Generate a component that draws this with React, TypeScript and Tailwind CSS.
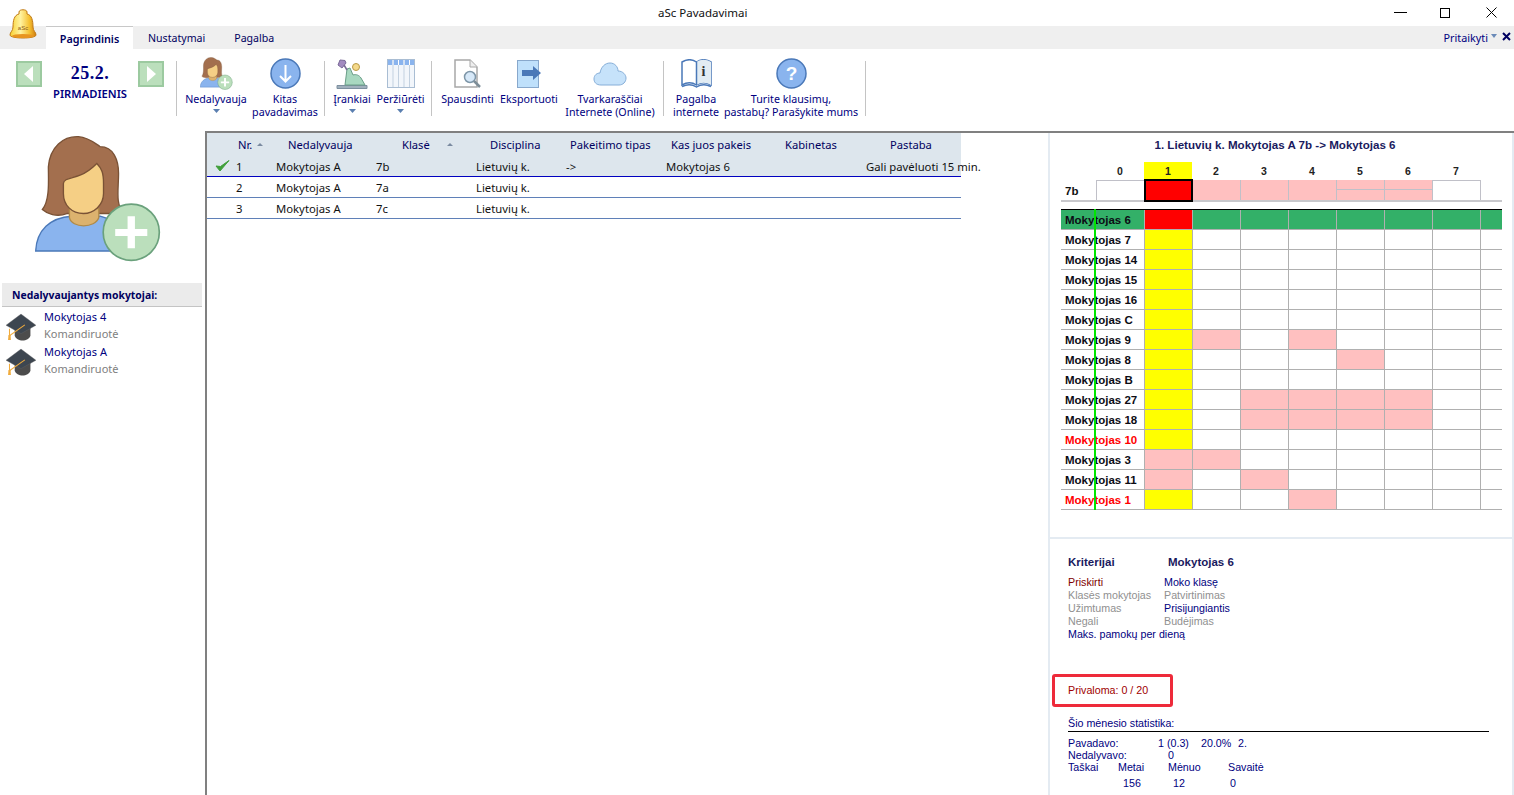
import type { ReactNode } from "react";

const ROWS: { name: string; red?: boolean; cells: string[] }[] = [
	{ name: "Mokytojas 7", cells: ["y"] },
	{ name: "Mokytojas 14", cells: ["y"] },
	{ name: "Mokytojas 15", cells: ["y"] },
	{ name: "Mokytojas 16", cells: ["y"] },
	{ name: "Mokytojas C", cells: ["y"] },
	{ name: "Mokytojas 9", cells: ["y", "p", "", "p"] },
	{ name: "Mokytojas 8", cells: ["y", "", "", "", "p"] },
	{ name: "Mokytojas B", cells: ["y"] },
	{ name: "Mokytojas 27", cells: ["y", "", "p", "p", "p", "p"] },
	{ name: "Mokytojas 18", cells: ["y", "", "p", "p", "p", "p"] },
	{ name: "Mokytojas 10", red: true, cells: ["y"] },
	{ name: "Mokytojas 3", cells: ["p", "p"] },
	{ name: "Mokytojas 11", cells: ["p", "", "p"] },
	{ name: "Mokytojas 1", red: true, cells: ["y", "", "", "p"] },
];

const COLS = [0, 1, 2, 3, 4, 5, 6, 7];

function cellColor(code: string) {
	if (code === "y") return "bg-[#ffff00]";
	if (code === "p") return "bg-[#ffc0c0]";
	return "bg-white";
}

function TeacherIcon({ size }: { size: number }) {
	return (
		<svg width={size} height={size} viewBox="105 15 380 380">
			<path d="M107 362C110 300 150 262 215 258L300 258C350 270 390 310 392 362Z" fill="#8ab4ee" stroke="#4a78b8" strokeWidth="4" />
			<path d="M127 238C150 210 145 150 145 110C150 50 190 18 235 20C265 22 285 40 300 50C340 50 355 90 355 130C355 180 345 220 370 250L300 250L200 250C170 262 140 250 127 238Z" fill="#a36f4e" stroke="#7a5236" strokeWidth="4" />
			<path d="M208 235L208 262C215 295 285 295 296 262L296 235Z" fill="#dcb26e" stroke="#b08a48" strokeWidth="4" />
			<path d="M190 160C190 145 215 145 240 135C265 125 280 110 290 100C305 115 310 130 310 160L310 190C310 225 280 250 250 250C215 250 190 225 190 190Z" fill="#f5cf85" stroke="#7a5236" strokeWidth="4" />
			<circle cx="393" cy="306" r="84" fill="#bbdfbc" stroke="#6aa17c" strokeWidth="5" />
			<path d="M345 296H382V258H404V296H441V317H404V354H382V317H345Z" fill="#fff" />
		</svg>
	);
}

function BellLogo() {
	return (
		<svg width="28" height="30" viewBox="0 0 28 30">
			<defs>
				<linearGradient id="bell" x1="0" x2="1" y1="0" y2="0">
					<stop offset="0" stopColor="#f8d030" />
					<stop offset="0.4" stopColor="#fff3a0" />
					<stop offset="0.75" stopColor="#f5c030" />
					<stop offset="1" stopColor="#d07c10" />
				</linearGradient>
			</defs>
			<path d="M10 3C10 0 18 0 18 3L18 5C23 6 24 12 24 18C24 22 27 23 27 26C27 30 1 30 1 26C1 23 4 22 4 18C4 12 5 6 10 5Z" fill="url(#bell)" stroke="#c07a14" strokeWidth="1" />
			<ellipse cx="14" cy="27" rx="11" ry="2" fill="#e89520" />
			<text x="14" y="21" fontSize="6" textAnchor="middle" fill="#8a5a10" fontFamily="Liberation Sans, sans-serif">aSc</text>
		</svg>
	);
}

function CapIcon() {
	return (
		<svg width="30" height="28" viewBox="20 548 86 78">
			<path d="M45 585L45 612C50 630 85 630 90 612L90 585Z" fill="#4c4c4c" />
			<path d="M20 582L63 550L106 582L63 606Z" fill="#3d4650" stroke="#6a6a6a" strokeWidth="1" />
			<path d="M30 592L30 612L74 581" fill="none" stroke="#f0ab3c" strokeWidth="3" />
			<path d="M27 610H33L34 624H26Z" fill="#f0ab3c" />
		</svg>
	);
}

function DownIcon() {
	return (
		<svg width="31" height="31" viewBox="0 0 31 31">
			<circle cx="15.500" cy="15.500" r="14.500" fill="#8ab4ee" stroke="#4a78b8" strokeWidth="1.500" />
			<path d="M15.500 7V23M10 18L15.500 23.500L21 18" fill="none" stroke="#fff" strokeWidth="2" />
		</svg>
	);
}

function ToolsIcon() {
	return (
		<svg width="32" height="30" viewBox="0 0 32 30">
			<path d="M1 26.500H31V29.500H1Z" fill="#a0b0bc" stroke="#7e90a0" strokeWidth="1" />
			<path d="M9 26L11 10L14 9L17 16C20 15 23 16 25 19L29 26Z" fill="#a8d8c0" stroke="#6a9e88" strokeWidth="1" />
			<path d="M4 1L9 1.500L10 4L6 9L2 6Z" fill="#a28ac0" stroke="#7a6a98" strokeWidth="1" />
			<path d="M8 6L11 11" stroke="#7a6a98" strokeWidth="1.500" />
			<circle cx="20" cy="8" r="3.500" fill="#f5d98a" stroke="#b89a48" strokeWidth="1" />
		</svg>
	);
}

function ViewIcon() {
	return (
		<svg width="28" height="29" viewBox="0 0 28 29">
			<rect x="0.500" y="0.500" width="27" height="28" fill="#f2f6fb" stroke="#a9bdd3" />
			<rect x="1" y="1" width="26" height="5" fill="#8ab4ee" />
			<path d="M6 1V28M11.500 1V28M17 1V28M22.500 1V28" stroke="#c3d1e0" strokeWidth="1" />
			<path d="M6 1V6M11.500 1V6M17 1V6M22.500 1V6" stroke="#fff" strokeWidth="1" />
		</svg>
	);
}

function DocSearchIcon() {
	return (
		<svg width="28" height="30" viewBox="0 0 28 30">
			<path d="M1 1H16L23 8V28H1Z" fill="#fff" stroke="#a8a8a8" strokeWidth="1.500" />
			<path d="M16 1V8H23" fill="#eee" stroke="#a8a8a8" strokeWidth="1" />
			<circle cx="16" cy="18" r="5.500" fill="#d6e8f8" stroke="#7e96a8" strokeWidth="1.500" />
			<path d="M20 22L26 28" stroke="#7e8e98" strokeWidth="2.500" />
		</svg>
	);
}

function ExportIcon() {
	return (
		<svg width="25" height="28" viewBox="0 0 25 28">
			<rect x="0.500" y="0.500" width="21" height="27" fill="#bfe0fb" stroke="#88a8cc" />
			<path d="M5 10H16V6L24 13L16 20V16H5Z" fill="#4a78b8" />
		</svg>
	);
}

function CloudIcon() {
	return (
		<svg width="34" height="24" viewBox="0 0 34 24">
			<path d="M8 23C3 23 1 20 1 17C1 13 4 11 7 11C8 5 12 1 17 1C22 1 25 5 25 9C30 9 33 13 33 16C33 20 30 23 26 23Z" fill="#c6e2fa" stroke="#86aed8" strokeWidth="1" />
		</svg>
	);
}

function BookIcon() {
	return (
		<svg width="31" height="29" viewBox="0 0 31 29">
			<path d="M1 26C6 23 11 23 15.500 26C20 23 25 23 30 26V3C25 0 20 0 15.500 3C11 0 6 0 1 3Z" fill="#fff" stroke="#4a78b8" strokeWidth="1.500" />
			<path d="M15.500 3C20 0 25 0 30 3V26C25 23 20 23 15.500 26Z" fill="#e2ecf3" />
			<path d="M15.500 3V26M1 27.500C6 25 11 25 15.500 28C20 25 25 25 30 27.500" fill="none" stroke="#4a78b8" strokeWidth="1.500" />
			<text x="22.500" y="17" fontSize="14" fontWeight="700" textAnchor="middle" fill="#333" fontFamily="Liberation Serif, serif">i</text>
		</svg>
	);
}

function HelpIcon() {
	return (
		<svg width="31" height="31" viewBox="0 0 31 31">
			<circle cx="15.500" cy="15.500" r="14.500" fill="#8ab4ee" stroke="#4a78b8" strokeWidth="1.500" />
			<text x="15.500" y="22" fontSize="19" fontWeight="700" textAnchor="middle" fill="#fff" fontFamily="Liberation Sans, sans-serif">?</text>
		</svg>
	);
}

function NavButton({ dir }: { dir: "left" | "right" }) {
	return (
		<div className="w-[26px] h-[26px] bg-[#bbdfbc] border-2 border-[#9ccaa0] flex items-center justify-center">
			<svg width="10" height="16" viewBox="0 0 10 16">
				<path d={dir === "left" ? "M9 0V16L0 8Z" : "M1 0V16L10 8Z"} fill="#fff" />
			</svg>
		</div>
	);
}

function Caret() {
	return (
		<svg width="7" height="4" viewBox="0 0 7 4" className="mt-[3px]">
			<path d="M0 0H7L3.500 4Z" fill="#5a7fb0" />
		</svg>
	);
}

function RibbonItem({
	width,
	icon,
	label,
	caret,
}: {
	width: string;
	icon: ReactNode;
	label: ReactNode;
	caret?: boolean;
}) {
	return (
		<div className={`${width} flex flex-col items-center shrink-0`}>
			<div className="h-[38px] flex items-center justify-center pb-[1px]">{icon}</div>
			<div className="text-center leading-[13px] whitespace-nowrap text-[10.700px] text-[#000080]">
				{label}
			</div>
			{caret && <Caret />}
		</div>
	);
}

function Sep({ className }: { className: string }) {
	return <div className={`w-px h-[55px] mt-[2px] bg-[#c4c4c4] shrink-0 ${className}`} />;
}

function TitleBar() {
	return (
		<div className="h-[26px] bg-white flex items-center shrink-0 relative">
			<div className="pl-[658px] text-[11.500px] text-[#111] whitespace-nowrap">
				aSc Pavadavimai
			</div>
			<div className="ml-auto flex items-center mr-[17px] -mt-[1px]">
				<div className="w-[13px] h-px bg-black" />
				<div className="ml-[33px] w-[10px] h-[10px] border border-black" />
				<svg width="11" height="11" viewBox="0 0 11 11" className="ml-[36px]">
					<path d="M0.500 0.500L10.500 10.500M10.500 0.500L0.500 10.500" stroke="#000" strokeWidth="1" />
				</svg>
			</div>
			<div className="absolute left-[9px] top-[9px] z-10">
				<BellLogo />
			</div>
		</div>
	);
}

function TabBar() {
	return (
		<div className="h-[23px] bg-[#efefef] flex items-start shrink-0 text-[#000060]">
			<div className="ml-[46px] w-[87px] h-[23px] bg-white border-t border-[#c8c8c8] text-center leading-[24px] font-semibold text-[10.800px]">
				Pagrindinis
			</div>
			<div className="ml-[15px] leading-[25px] h-[23px] text-[10.600px]">Nustatymai</div>
			<div className="ml-[29px] leading-[25px] h-[23px] text-[10.600px]">Pagalba</div>
			<div className="ml-auto flex items-center h-[24px] mr-[3px] text-[#000080] text-[10.800px]">
				<span>Pritaikyti</span>
				<svg width="6" height="4" viewBox="0 0 6 4" className="ml-[3px] mb-[4px]">
					<path d="M0 0H6L3 4Z" fill="#6a8ab8" />
				</svg>
				<svg width="9" height="9" viewBox="0 0 9 9" className="ml-[5px] mb-[3px]">
					<path d="M1 1L8 8M8 1L1 8" stroke="#000060" strokeWidth="2" />
				</svg>
			</div>
		</div>
	);
}

function Ribbon() {
	return (
		<div className="h-[83px] bg-white flex items-start pt-[10px] shrink-0">
			<div className="ml-[16px] mt-[2px]">
				<NavButton dir="left" />
			</div>
			<div className="w-[96px] flex flex-col items-center text-[#000080] shrink-0">
				<div className="mt-[2px] font-['Liberation_Serif',serif] font-bold text-[18px] tracking-[0.5px] leading-[24px]">25.2.</div>
				<div className="text-[11.200px] font-semibold leading-[16px] mt-[1px]">PIRMADIENIS</div>
			</div>
			<div className="mt-[2px]">
				<NavButton dir="right" />
			</div>
			<Sep className="ml-[12px]" />
			<div className="-mt-[4px] flex">
				<RibbonItem width="w-[78px]" icon={<TeacherIcon size={33} />} label="Nedalyvauja" caret />
				<RibbonItem width="w-[60px]" icon={<DownIcon />} label={<>Kitas<br />pavadavimas</>} />
			</div>
			<Sep className="ml-[9px]" />
			<div className="-mt-[4px] flex ml-[2px]">
				<RibbonItem width="w-[50px]" icon={<ToolsIcon />} label="Įrankiai" caret />
				<RibbonItem width="w-[47px]" icon={<ViewIcon />} label="Peržiūrėti" caret />
			</div>
			<Sep className="ml-[7px]" />
			<div className="-mt-[4px] flex ml-[5px]">
				<RibbonItem width="w-[61px]" icon={<DocSearchIcon />} label="Spausdinti" />
				<RibbonItem width="w-[62px]" icon={<ExportIcon />} label="Eksportuoti" />
				<RibbonItem width="w-[100px]" icon={<CloudIcon />} label={<>Tvarkaraščiai<br />Internete (Online)</>} />
			</div>
			<Sep className="ml-[3px]" />
			<div className="-mt-[4px] flex">
				<RibbonItem width="w-[64px]" icon={<BookIcon />} label={<>Pagalba<br />internete</>} />
				<RibbonItem width="w-[126px]" icon={<HelpIcon />} label={<>Turite klausimų,<br />pastabų? Parašykite mums</>} />
			</div>
			<Sep className="ml-[11px]" />
		</div>
	);
}

function LeftPanel() {
	return (
		<div className="w-[205px] shrink-0 flex flex-col bg-white">
			<div className="h-[151px] pl-[35px] pt-[3px]">
				<TeacherIcon size={127} />
			</div>
			<div className="ml-[2px] w-[200px] h-[24px] bg-[#ebebeb] border-b border-[#c4c4c4] pl-[10px] text-[10.400px] font-bold leading-[24px] text-[#000060]">
				Nedalyvaujantys mokytojai:
			</div>
			<div className="flex flex-col pt-[1px]">
				{["Mokytojas 4", "Mokytojas A"].map((name) => (
					<div key={name} className="h-[35px] flex">
						<div className="w-[44px] pl-[6px] pt-[5px]">
							<CapIcon />
						</div>
						<div className="text-[11px] leading-[17px]">
							<div className="text-[#000080]">{name}</div>
							<div className="text-[#808080]">Komandiruotė</div>
						</div>
					</div>
				))}
			</div>
		</div>
	);
}

const TABLE_GRID = "grid grid-cols-[29px_40px_100px_100px_90px_100px_100px_100px_95px]";

function TableHead() {
	return (
		<div className={`${TABLE_GRID} h-[23px] bg-[#dde6ed] w-[754px] text-[#000060] text-[11.200px] leading-[23px] whitespace-nowrap`}>
			<div />
			<div className="pl-[2px] flex items-center">
				Nr.
				<svg width="6" height="3" viewBox="0 0 6 3" className="ml-[5px]"><path d="M0 3H6L3 0Z" fill="#7a8aa0" /></svg>
			</div>
			<div className="pl-[12px]">Nedalyvauja</div>
			<div className="pl-[26px] flex items-center">
				Klasė
				<svg width="6" height="3" viewBox="0 0 6 3" className="ml-[17px]"><path d="M0 3H6L3 0Z" fill="#7a8aa0" /></svg>
			</div>
			<div className="pl-[14px]">Disciplina</div>
			<div className="pl-[4px]">Pakeitimo tipas</div>
			<div className="pl-[5px]">Kas juos pakeis</div>
			<div className="pl-[19px]">Kabinetas</div>
			<div className="pl-[24px]">Pastaba</div>
		</div>
	);
}

function TableRow({
	nr,
	klase,
	selected,
}: {
	nr: number;
	klase: string;
	selected?: boolean;
}) {
	return (
		<div
			className={`${TABLE_GRID} w-[754px] h-[21px] border-b text-[11.300px] leading-[22px] text-[#111] whitespace-nowrap ${
				selected ? "bg-[#dde6ed] border-[#0000c0]" : "bg-white border-[#5f80b8]"
			}`}
		>
			<div className="pl-[8px] pt-[3px]">
				{selected && (
					<svg width="15" height="13" viewBox="0 0 15 13">
						<path d="M1 7L5 12L14 1.500L5.500 7.500Z" fill="#3f9f3a" stroke="#3f9f3a" strokeWidth="1" />
					</svg>
				)}
			</div>
			<div>{nr}</div>
			<div>Mokytojas A</div>
			<div>{klase}</div>
			<div>Lietuvių k.</div>
			<div>{selected ? "->" : ""}</div>
			<div>{selected ? "Mokytojas 6" : ""}</div>
			<div />
			<div>{selected ? "Gali pavėluoti 15 min." : ""}</div>
		</div>
	);
}

function MainTable() {
	return (
		<div className="w-[843px] shrink-0 border-l-2 border-[#808080] bg-white">
			<TableHead />
			<TableRow nr={1} klase="7b" selected />
			<TableRow nr={2} klase="7a" />
			<TableRow nr={3} klase="7c" />
		</div>
	);
}

function ClassRow() {
	return (
		<div className="flex h-[22px] ml-[11px] w-[441px] border-b-2 border-[#c8c8cc]">
			<div className="w-[35px] font-bold text-[11.500px] leading-[22px] pl-[4px] text-[#111]">7b</div>
			<div className="w-[49px] h-[20px] border border-[#c0c0c8] border-b-0 bg-white" />
			<div className="w-[49px] h-[23px] -mt-[1px] -ml-[1px] bg-[#ff0000] border-2 border-black relative z-10" />
			{[2, 3, 4].map((c) => (
				<div key={c} className="w-[48px] h-[20px] bg-[#ffc0c0] border-r border-[#c0c0c8]" />
			))}
			{[5, 6].map((c) => (
				<div key={c} className="w-[48px] h-[20px] flex flex-col bg-[#ffc0c0] border-r border-[#c0c0c8]">
					<div className="h-[10px] border-b border-[#c0c0c8]" />
				</div>
			))}
			<div className="w-[48px] h-[20px] bg-white border-r border-t border-[#c0c0c8]" />
		</div>
	);
}

function GridRow({
	name,
	red,
	cells,
	active,
}: {
	name: string;
	red?: boolean;
	cells: string[];
	active?: boolean;
}) {
	return (
		<div className={`flex h-[20px] border-b border-[#b0b0b0] ${active ? "bg-[#33b068]" : ""}`}>
			<div className={`w-[84px] pl-[4px] border-r border-[#b0b0b0] font-bold text-[11.500px] leading-[21px] whitespace-nowrap ${red ? "text-[#ff0000]" : "text-[#0c0c14]"}`}>
				{name}
			</div>
			{COLS.map((c) => {
				const code = cells[c] ?? "";
				const isLast = c === 7;
				const bg = active ? (c === 0 ? "bg-[#ff0000]" : "bg-[#33b068]") : cellColor(code);
				return (
					<div
						key={c}
						className={`${isLast ? "w-[21px]" : "w-[48px] border-r border-[#b0b0b0]"} ${bg}`}
					/>
				);
			})}
		</div>
	);
}

function Schedule() {
	return (
		<div className="h-[406px] shrink-0 border-b-2 border-[#e4ebf2]">
			<div className="text-center text-[11.600px] font-bold text-[#1a1a5e] pt-[5px] leading-[14px] w-[450px]">
				1. Lietuvių k. Mokytojas A 7b -&gt; Mokytojas 6
			</div>
			<div className="flex h-[18px] ml-[46px] mt-[10px] text-[10.500px] font-bold text-[#222] leading-[19px] text-center">
				{COLS.map((c) => (
					<div key={c} className={`w-[48px] ${c === 1 ? "bg-[#ffff00]" : ""}`}>
						{c}
					</div>
				))}
			</div>
			<ClassRow />
			<div className="ml-[11px] mt-[7px] w-[441px] relative">
				<div className="border-t border-black" />
				<GridRow name="Mokytojas 6" cells={[]} active />
				{ROWS.map((r) => (
					<GridRow key={r.name} name={r.name} red={r.red} cells={r.cells} />
				))}
				<div className="absolute left-[33px] top-0 bottom-0 w-[2px] bg-[#00e600]" />
			</div>
		</div>
	);
}

function Criteria() {
	return (
		<div className="flex flex-col pl-[18px] text-[10.700px] leading-[13px] text-[#000080]">
			<div className="flex font-bold text-[11.500px] text-[#1a1a5e] mt-[16px] leading-[14px]">
				<div className="w-[100px]">Kriterijai</div>
				<div>Mokytojas 6</div>
			</div>
			<div className="grid grid-cols-[96px_1fr] mt-[7px] whitespace-nowrap">
				<div className="text-[#800000]">Priskirti</div>
				<div>Moko klasę</div>
				<div className="text-[#909090]">Klasės mokytojas</div>
				<div className="text-[#909090]">Patvirtinimas</div>
				<div className="text-[#909090]">Užimtumas</div>
				<div>Prisijungiantis</div>
				<div className="text-[#909090]">Negali</div>
				<div className="text-[#909090]">Budėjimas</div>
				<div className="col-span-2">Maks. pamokų per dieną</div>
			</div>
			<div className="-ml-[16px] mt-[33px] w-[121px] h-[33px] border-[3px] border-[#ee2a3a] rounded-[3px] pl-[13px] leading-[27px] text-[#a00000]">
				Privaloma: 0 / 20
			</div>
			<div className="mt-[10px] w-[421px] border-b border-black pb-[1px]">Šio mėnesio statistika:</div>
			<div className="flex mt-[5px] leading-[12px] whitespace-nowrap">
				<div className="w-[90px]">Pavadavo:</div>
				<div className="w-[43px]">1 (0.3)</div>
				<div className="w-[37px]">20.0%</div>
				<div>2.</div>
			</div>
			<div className="flex leading-[12px]">
				<div className="w-[100px]">Nedalyvavo:</div>
				<div>0</div>
			</div>
			<div className="flex leading-[12px]">
				<div className="w-[50px]">Taškai</div>
				<div className="w-[50px]">Metai</div>
				<div className="w-[60px]">Mėnuo</div>
				<div>Savaitė</div>
			</div>
			<div className="flex leading-[12px] mt-[4px]">
				<div className="w-[55px] shrink-0" />
				<div className="w-[50px]">156</div>
				<div className="w-[57px]">12</div>
				<div>0</div>
			</div>
		</div>
	);
}

export default function App() {
	return (
		<div className="w-[1514px] h-[795px] overflow-hidden flex flex-col bg-white font-['Noto_Sans',sans-serif]">
			<TitleBar />
			<TabBar />
			<Ribbon />
			<div className="flex-1 flex min-h-0">
				<LeftPanel />
				<div className="flex-1 flex flex-col min-h-0">
					<div className="border-t-2 border-[#808080] flex-1 flex min-h-0 -mt-[1px]">
						<MainTable />
						<div className="w-[466px] shrink-0 border-l-2 border-r-2 border-[#e4ebf2] flex flex-col font-['Liberation_Sans',sans-serif]">
							<Schedule />
							<Criteria />
						</div>
					</div>
				</div>
			</div>
		</div>
	);
}
